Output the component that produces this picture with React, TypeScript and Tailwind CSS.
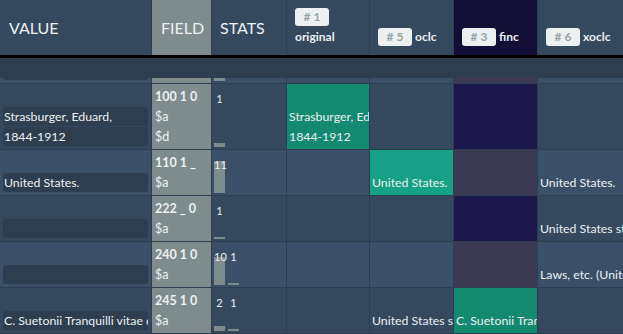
type Tone = 'none' | 'green' | 'finc';

type Cell = { tone: Tone; lines?: string[] };

type Row = {
  tag: string;
  subs: string[];
  value: string[];
  stats: { n: string; h: number }[];
  cells: Cell[];
};

const widths = ['w-[60px]', 'w-[75px]', 'w-[83px]', 'w-[84px]', 'w-[84px]', 'w-[120px]'];

const rows: Row[] = [
  {
    tag: '100 1 0',
    subs: ['$a', '$d'],
    value: ['Strasburger, Eduard,', '1844-1912'],
    stats: [{ n: '1', h: 4 }],
    cells: [
      { tone: 'green', lines: ['Strasburger, Eduard,', '1844-1912'] },
      { tone: 'none' },
      { tone: 'finc' },
      { tone: 'none' },
    ],
  },
  {
    tag: '110 1 _',
    subs: ['$a'],
    value: ['United States.'],
    stats: [{ n: '11', h: 32 }],
    cells: [
      { tone: 'none' },
      { tone: 'green', lines: ['United States.'] },
      { tone: 'finc' },
      { tone: 'none', lines: ['United States.'] },
    ],
  },
  {
    tag: '222 _ 0',
    subs: ['$a'],
    value: [''],
    stats: [{ n: '1', h: 2 }],
    cells: [
      { tone: 'none' },
      { tone: 'none' },
      { tone: 'finc' },
      { tone: 'none', lines: ['United States statutes'] },
    ],
  },
  {
    tag: '240 1 0',
    subs: ['$a'],
    value: [''],
    stats: [
      { n: '10', h: 28 },
      { n: '1', h: 2 },
    ],
    cells: [
      { tone: 'none' },
      { tone: 'none' },
      { tone: 'finc' },
      { tone: 'none', lines: ['Laws, etc. (United States)'] },
    ],
  },
  {
    tag: '245 1 0',
    subs: ['$a'],
    value: ['C. Suetonii Tranquilli vitae duodecim Caesarum'],
    stats: [
      { n: '2', h: 5 },
      { n: '1', h: 2 },
    ],
    cells: [
      { tone: 'none' },
      { tone: 'none', lines: ['United States statutes'] },
      { tone: 'green', lines: ['C. Suetonii Tranquilli vitae'] },
      { tone: 'none' },
    ],
  },
];

const partial: Row = {
  tag: '',
  subs: ['$a'],
  value: [''],
  stats: [{ n: '', h: 4 }],
  cells: [{ tone: 'none' }, { tone: 'none' }, { tone: 'finc' }, { tone: 'none' }],
};

function Badge({ n }: { n: string }) {
  return (
    <span className="flex h-[18px] w-[34px] items-center justify-center rounded-[3px] bg-[#ecf0f1] text-[12px] font-bold text-[#95a5a6]">
      # {n}
    </span>
  );
}

function SourceHead({ n, name, w, dark }: { n: string; name: string; w: string; dark?: boolean }) {
  return (
    <div
      className={`${w} flex shrink-0 flex-wrap content-end items-center gap-x-[3px] gap-y-[2px] border-r border-[#2c3e50] pb-[9px] pl-[8px] ${
        dark ? 'bg-[#120e35]' : 'bg-[#34495e]'
      }`}
    >
      <Badge n={n} />
      <span className="flex h-[18px] items-center text-[12px] font-bold text-[#ecf0f1]">{name}</span>
    </div>
  );
}

function DataRow({ row, even }: { row: Row; even: boolean }) {
  const rowBg = even ? 'bg-[#3a5068]' : 'bg-[#34495e]';
  return (
    <div className={`flex border-b border-[#2c3e50] ${rowBg}`}>
      <div className="w-[152px] shrink-0 border-r border-[#2c3e50] pb-[2px] pl-[3px] pr-[3px] pt-[3px]">
        <div className="h-[20px]" />
        {row.value.map((v, i) => (
          <div
            key={i}
            className="mb-[1px] h-[19px] overflow-hidden whitespace-nowrap rounded-[3px] bg-[#2c3e50] px-[1px] text-[12.3px] leading-[19px] text-[#ecf0f1]"
          >
            {v}
          </div>
        ))}
      </div>
      <div className={`${widths[0]} shrink-0 border-r border-[#2c3e50] bg-[#7f8c8d] pb-[2px] pl-[3px] pt-[3px] text-[12.5px] leading-[20px] text-[#ecf0f1]`}>
        <div className="h-[20px] whitespace-nowrap font-bold">{row.tag}</div>
        {row.subs.map((s) => (
          <div key={s} className="h-[20px]">
            {s}
          </div>
        ))}
      </div>
      <div className={`${widths[1]} flex shrink-0 gap-[3px] border-r border-[#2c3e50] pb-[2px] pl-[2px]`}>
        {row.stats.map((s, i) => (
          <div key={i} className="grid w-[11px]">
            <div className="[grid-area:1/1] w-[11px] self-end bg-[#7f8c8d]" style={{ height: s.h }} />
            <span className="[grid-area:1/1] self-start justify-self-center whitespace-nowrap pt-[9px] text-[11px] leading-[11px] text-[#ecf0f1]">
              {s.n}
            </span>
          </div>
        ))}
      </div>
      {row.cells.map((c, i) => {
        const bg =
          c.tone === 'green'
            ? even
              ? 'bg-[#16a085]'
              : 'bg-[#138a70]'
            : c.tone === 'finc'
              ? even
                ? 'bg-[#3c3955]'
                : 'bg-[#1b1748]'
              : '';
        return (
          <div
            key={i}
            className={`${widths[i + 2]} shrink-0 overflow-hidden border-r border-[#2c3e50] pb-[2px] pl-[2px] pt-[3px] text-[12.3px] leading-[20px] text-[#ecf0f1] ${bg}`}
          >
            {c.lines && (
              <>
                <div className="h-[20px]" />
                {c.lines.map((l, j) => (
                  <div key={j} className="h-[20px] whitespace-nowrap">
                    {l}
                  </div>
                ))}
              </>
            )}
          </div>
        );
      })}
    </div>
  );
}

export default function App() {
  return (
    <div className="h-[334px] w-[623px] overflow-hidden bg-[#2c3e50] font-['Lato',sans-serif] text-[#ecf0f1]">
      <div className="flex h-[58px] border-b-[3px] border-black bg-[#34495e]">
        <div className="flex w-[152px] shrink-0 items-center border-r border-[#2c3e50] pl-[9px] text-[16px]">VALUE</div>
        <div className="flex w-[60px] shrink-0 items-center border-r border-[#2c3e50] bg-[#7f8c8d] pl-[9px] text-[16px]">
          FIELD
        </div>
        <div className="flex w-[75px] shrink-0 items-center border-r border-[#2c3e50] pl-[8px] text-[16px]">STATS</div>
        <SourceHead n="1" name="original" w="w-[83px]" />
        <SourceHead n="5" name="oclc" w="w-[84px]" />
        <SourceHead n="3" name="finc" w="w-[84px]" dark />
        <SourceHead n="6" name="xoclc" w="w-[120px]" />
      </div>
      <div className="h-[20px]" />
      <div className="flex h-[6px] flex-col justify-end overflow-hidden">
        <DataRow row={partial} even />
      </div>
      {rows.map((r, i) => (
        <DataRow key={r.tag} row={r} even={i % 2 === 1} />
      ))}
    </div>
  );
}
